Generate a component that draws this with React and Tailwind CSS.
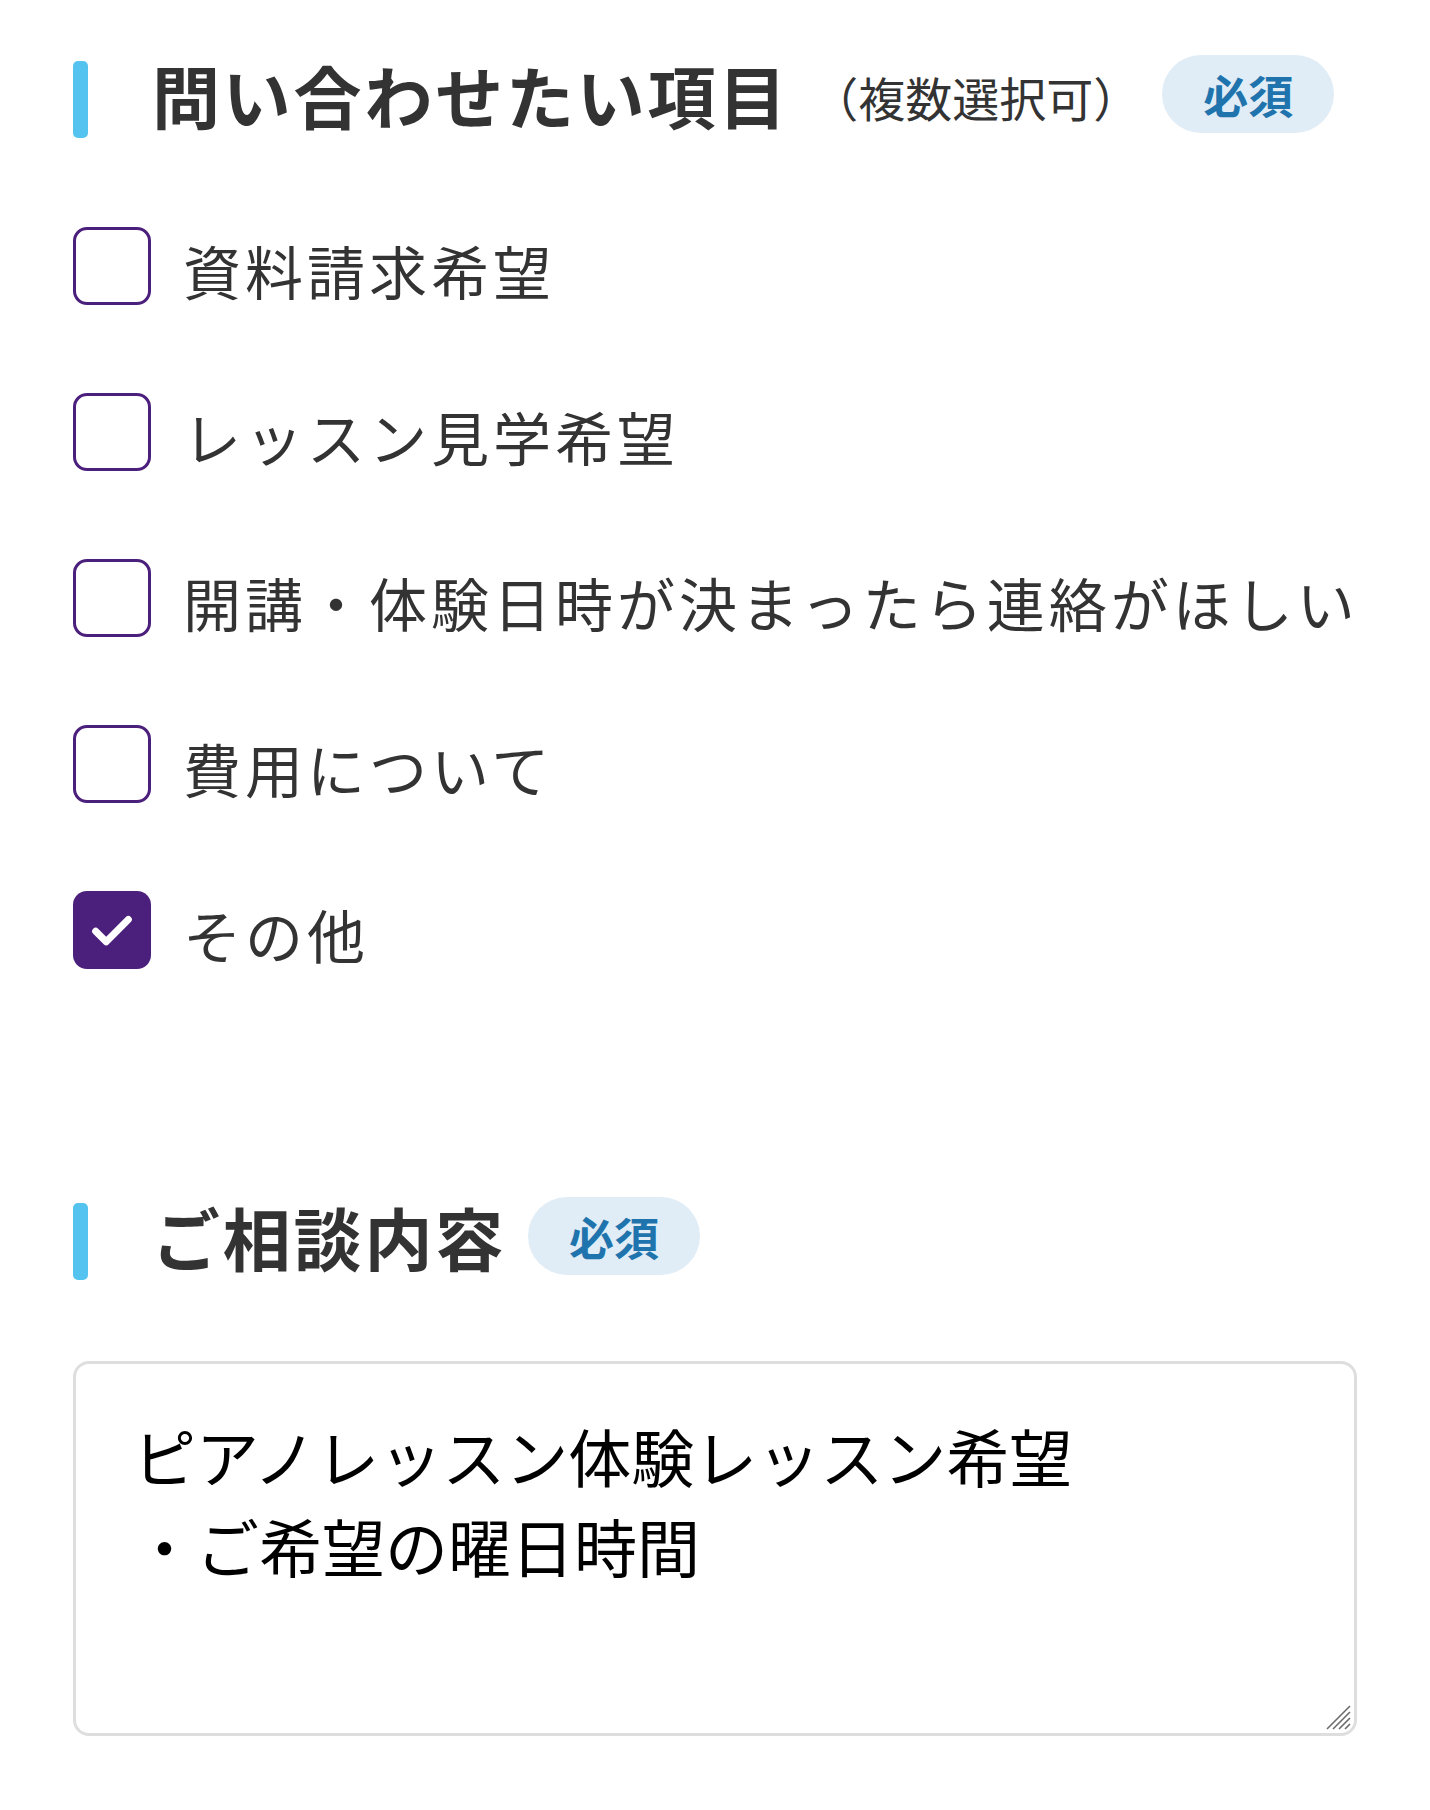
import { useState } from 'react';

const OPTIONS = [
  { label: '資料請求希望', checked: false },
  { label: 'レッスン見学希望', checked: false },
  { label: '開講・体験日時が決まったら連絡がほしい', checked: false },
  { label: '費用について', checked: false },
  { label: 'その他', checked: true },
];

const FONT = '[font-family:"Noto_Sans_CJK_JP","Noto_Sans",sans-serif]';

function RequiredBadge() {
  return (
    <span className="inline-flex items-center justify-center w-[172px] h-[78px] rounded-full bg-[#e1edf6] text-[#1f74ad] text-[45px] font-bold leading-none -translate-y-[5px]">
      必須
    </span>
  );
}

function Heading({ children, note }) {
  return (
    <div className="flex items-center">
      <span className="block w-[15px] h-[77px] rounded-[5px] bg-[#55c3f0]" />
      <h2 className="ml-[64px] pb-[9px] text-[68px] font-bold leading-none tracking-[2.8px] text-[#333]">{children}</h2>
      {note && <span className="ml-[22px] pb-[6px] text-[47px] leading-none text-[#333]">（複数選択可）</span>}
      <span className="ml-[22px]">
        <RequiredBadge />
      </span>
    </div>
  );
}

function CheckRow({ label, checked, onToggle }) {
  return (
    <label className="flex items-center cursor-pointer" onClick={onToggle}>
      {checked ? (
        <span className="flex shrink-0 items-center justify-center w-[78px] h-[78px] rounded-[14px] bg-[#4b1f7c]">
          <svg width="56" height="56" viewBox="0 0 24 24" fill="none" stroke="white" strokeWidth="3" strokeLinecap="round" strokeLinejoin="round">
            <path d="M5 12.5l4.5 4.5L19 7.5" />
          </svg>
        </span>
      ) : (
        <span className="block shrink-0 w-[78px] h-[78px] rounded-[14px] border-[3px] border-[#4b1f7c] bg-white" />
      )}
      <span className="ml-[32px] mt-[8px] whitespace-nowrap text-[58px] leading-none tracking-[4px] text-[#333]">{label}</span>
    </label>
  );
}

export default function App() {
  const [items, setItems] = useState(OPTIONS);
  const toggle = (i) =>
    setItems((prev) => prev.map((it, j) => (j === i ? { ...it, checked: !it.checked } : it)));

  return (
    <div className={`min-h-[1810px] bg-white pl-[73px] pr-[73px] pt-[60px] ${FONT}`}>
      <Heading note>問い合わせたい項目</Heading>

      <div className="mt-[89px] flex flex-col gap-[88px]">
        {items.map((it, i) => (
          <CheckRow key={i} label={it.label} checked={it.checked} onToggle={() => toggle(i)} />
        ))}
      </div>

      <div className="mt-[233px]">
        <Heading>ご相談内容</Heading>
      </div>

      <div className="relative mt-[81px] w-[1284px]">
        <textarea
          className={`block w-full h-[375px] resize-none rounded-[16px] border-[3px] border-[#dedede] pl-[57px] pr-[60px] pt-[46px] text-[63px] leading-[90px] text-black outline-none ${FONT}`}
          defaultValue={'ピアノレッスン体験レッスン希望\n・ご希望の曜日時間'}
        />
        <svg className="absolute right-[6px] bottom-[6px] pointer-events-none" width="26" height="26" viewBox="0 0 26 26" stroke="#6b6b6b" strokeWidth="1.6">
          <path d="M2 25L25 2M8 25L25 8M14 25L25 14M20 25L25 20" />
        </svg>
      </div>
    </div>
  );
}
